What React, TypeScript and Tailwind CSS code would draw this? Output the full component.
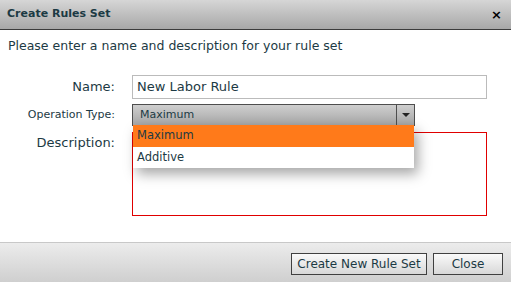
export default function App() {
  const text = "text-[#1c3a44]";
  return (
    <div className="w-[511px] h-[282px] flex flex-col bg-white font-['DejaVu_Sans',sans-serif] overflow-hidden">
      {/* Header */}
      <div className="h-[30px] shrink-0 flex items-center justify-between pl-[7px] pr-[9px] bg-gradient-to-b from-[#d6d6d6] to-[#a8a8a8] border-b border-[#3c3c3c]">
        <span className={`text-[11px] font-bold ${text}`}>Create Rules Set</span>
        <span className="text-[13px] font-bold text-black leading-none">×</span>
      </div>

      {/* Body */}
      <div className="flex-1 relative">
        <p className={`pl-[8px] pt-[7px] text-[12.5px] ${text}`}>
          Please enter a name and description for your rule set
        </p>

        <div className="mt-[19px] grid grid-cols-[115px_1fr] gap-x-[17px] pr-[24px]">
          <label className={`self-center text-right text-[13px] ${text}`}>Name:</label>
          <div className="h-[24px] border border-[#bbbbbb] flex items-center pl-[4px] text-[13px] text-[#1c3a44]">
            New Labor Rule
          </div>

          <label className={`mt-[6px] self-center text-right text-[11px] ${text}`}>Operation Type:</label>
          <div className="relative mt-[5px] w-[283px]">
            <div className="h-[22px] flex border border-[#4e4e4e] bg-gradient-to-b from-[#cfcfcf] to-[#a6a6a6]">
              <span className={`flex-1 flex items-center pl-[7px] text-[11px] ${text}`}>Maximum</span>
              <span className="w-[18px] border-l border-[#4e4e4e] flex items-center justify-center">
                <svg width="8" height="4" viewBox="0 0 8 4">
                  <path d="M0 0h8L4 4z" fill="#222" />
                </svg>
              </span>
            </div>
            {/* Dropdown list */}
            <div className="absolute left-[1px] top-[21px] w-[281px] z-10 bg-white shadow-[4px_6px_12px_rgba(0,0,0,0.35)]">
              <div className={`h-[22px] flex items-center pl-[4px] text-[11.5px] bg-[#ff7a1a] ${text}`}>Maximum</div>
              <div className={`h-[21px] flex items-center pl-[4px] text-[11.5px] ${text}`}>Additive</div>
            </div>
          </div>

          <label className={`mt-[4px] pt-[3px] text-right text-[13px] ${text}`}>Description:</label>
          <div className="mt-[6px] h-[84px] border border-[#e00000]" />
        </div>
      </div>

      {/* Footer */}
      <div className="h-[40px] shrink-0 border-t border-[#c8c8c8] bg-gradient-to-b from-[#ececec] to-[#cfcfcf] flex items-center justify-end gap-[6px] pr-[8px] pt-[2px]">
        <button className={`h-[22px] w-[136px] border border-[#404040] bg-gradient-to-b from-[#fafafa] to-[#d8d8d8] text-[12px] ${text}`}>
          Create New Rule Set
        </button>
        <button className={`h-[22px] w-[70px] border border-[#404040] bg-gradient-to-b from-[#fafafa] to-[#d8d8d8] text-[12px] ${text}`}>
          Close
        </button>
      </div>
    </div>
  );
}
